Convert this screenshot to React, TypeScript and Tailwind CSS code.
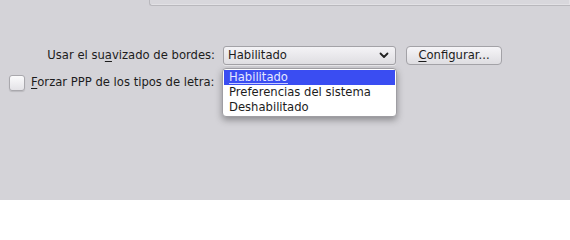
import React from 'react';

const font = {fontFamily: '"DejaVu Sans", "Liberation Sans", sans-serif'};

function Mnemonic({before, letter, after}: {before: string; letter: string; after: string}) {
  return (
    <span className="whitespace-nowrap">
      {before}
      <span className="underline underline-offset-2">{letter}</span>
      {after}
    </span>
  );
}

function Chevron() {
  return (
    <svg width="10" height="7" viewBox="0 0 10 7" className="shrink-0">
      <path d="M1.5 1.5 L5 5 L8.5 1.5" fill="none" stroke="#222" strokeWidth="1.8" strokeLinecap="round" strokeLinejoin="round" />
    </svg>
  );
}

const options = ['Habilitado', 'Preferencias del sistema', 'Deshabilitado'];

export default function App() {
  return (
    <div
      className="relative h-[200px] w-[570px] overflow-hidden bg-[#d4d3d8] text-[11.6px] leading-none text-[#1c1c1c]"
      style={font}
    >
      <div className="ml-[149px] h-[6px] rounded-bl-[3px] border-b border-l border-[#b9b8bd] bg-[#d8d7dc] shadow-[inset_-1px_-1px_0_#e2e1e5]" />

      <div className="mt-[40px] grid grid-cols-[216px_auto] items-center gap-y-[10px]">
        <div className="pr-[1px] text-right">
          <Mnemonic before="Usar el su" letter="a" after="vizado de bordes:" />
        </div>
        <div className="flex items-center gap-[10px] pl-[7px]">
          <div className="flex h-[19px] w-[173px] items-center justify-between rounded-[3px] border border-[#a3a2a7] bg-gradient-to-b from-[#f4f3f6] to-[#dfdee2] pl-[4px] pr-[6px] shadow-[0_1px_0_rgba(255,255,255,0.5)]">
            <span>Habilitado</span>
            <Chevron />
          </div>
          <div className="flex h-[19px] w-[96px] items-center justify-center rounded-[4px] border border-[#a3a2a7] bg-gradient-to-b from-[#f6f5f8] to-[#dedde1]">
            <Mnemonic before="" letter="C" after="onfigurar..." />
          </div>
        </div>

        <div className="flex items-center gap-[6px] pl-[9px]">
          <div className="h-[16px] w-[16px] shrink-0 rounded-[3px] border border-[#a9a8ad] bg-gradient-to-b from-[#fbfbfc] to-[#e4e3e7] shadow-[0_1px_1px_rgba(0,0,0,0.12)]" />
          <Mnemonic before="" letter="F" after="orzar PPP de los tipos de letra:" />
        </div>
        <div />
      </div>

      <div className="absolute left-[222px] top-[68px] w-[175px] rounded-[4px] border border-[#9f9ea3] bg-white py-[1px] shadow-[0_3px_7px_rgba(0,0,0,0.35)]">
        {options.map((option, i) => (
          <div
            key={option}
            className={
              i === 0
                ? 'mx-[1px] flex h-[15px] items-center bg-[#3a4df2] pl-[5px] text-[#e6e8ff] underline decoration-[#c8ccff] underline-offset-2'
                : 'mx-[1px] flex h-[15px] items-center pl-[5px]'
            }
          >
            {option}
          </div>
        ))}
      </div>
    </div>
  );
}
